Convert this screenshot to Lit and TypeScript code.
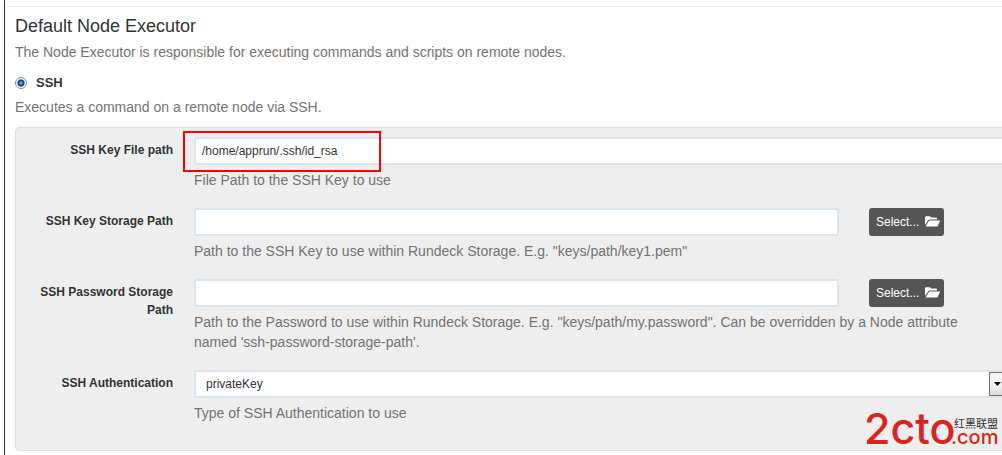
import { LitElement, html, css, svg } from "lit";
import { customElement } from "lit/decorators.js";

const folder = svg`<path d="M0 9V1.4Q0 .2 1.2 .2H4.6Q5.6 .2 5.8 1.4H10.6Q12 1.4 12 2.6V3.4H4.6L3.2 4.2Z"/><path d="M4.8 4.4H15.2L12.4 10.4H.6L3.8 4.9Z"/>`;

@customElement("app-root")
export class AppRoot extends LitElement {
  static styles = css`
    :host {
      display: block;
      height: 100vh;
      overflow: hidden;
      background: #fff;
      color: #333;
      font: 14px/20px "Liberation Sans", Arial, sans-serif;
    }
    * { box-sizing: border-box; }
    .page {
      position: relative;
      min-height: 100%;
      margin-left: 4px;
      border-left: 1px solid #333;
      padding-top: 6px;
    }
    .section {
      border-top: 1px solid #eee;
      padding: 9px 0 0 10px;
    }
    h4 { margin: 0 0 6px; font-size: 18px; line-height: 20px; font-weight: 400; }
    p { margin: 0; color: #737373; }
    .choice {
      display: flex;
      align-items: center;
      gap: 9px;
      margin: 11px 0 4px;
      font-size: 13px;
      font-weight: 700;
    }
    .choice input {
      appearance: none;
      width: 12px;
      height: 12px;
      margin: 0;
      border: 1px solid #8a8d90;
      border-radius: 50%;
      background: radial-gradient(circle, #5cc8f0 0, #1b6f9c 2px, #12344d 3px, #e4e6e8 4px, #fff 5px);
    }
    .panel {
      display: grid;
      gap: 18px;
      margin: 10px -16px 0 0;
      padding: 9px 9px 27px;
      border: 1px solid #ddd;
      border-radius: 4px;
      background: #eee;
    }
    .row { display: grid; grid-template-columns: 148px minmax(0, 1fr); column-gap: 21px; }
    .row > label {
      padding-top: 4px;
      font-size: 12px;
      line-height: 18px;
      font-weight: 700;
      text-align: right;
    }
    .field { position: relative; display: grid; gap: 5px; }
    .line { display: flex; gap: 30px; padding-right: 64px; }
    .text, select {
      flex: 1;
      width: 100%;
      min-width: 0;
      height: 28px;
      border: 2px solid #dbe5ed;
      border-radius: 3px;
      background: #fff;
      color: #333;
      padding: 0 6px;
      font: 12px "Liberation Sans", Arial, sans-serif;
    }
    select { appearance: none; padding: 0 10px; }
    .combo { display: grid; }
    .combo > * { grid-area: 1 / 1; }
    .arrow {
      display: grid;
      place-items: center;
      justify-self: end;
      width: 17px;
      margin: 2px;
      border: 1px solid #707070;
      background: linear-gradient(#f4f4f4 50%, #d8d8d8);
      pointer-events: none;
    }
    button {
      display: flex;
      align-items: center;
      justify-content: space-between;
      width: 75px;
      height: 28px;
      padding: 0 3px 0 7px;
      border: 0;
      border-radius: 3px;
      background: #555;
      color: #fff;
      font: 12px "Liberation Sans", Arial, sans-serif;
    }
    .help { padding-right: 20px; }
    .mark {
      position: absolute;
      left: -11px;
      top: -6px;
      width: 198px;
      height: 41px;
      border: 2px solid #f00;
      pointer-events: none;
    }
    .logo { position: absolute; right: 2px; top: 400px; }
    .red { fill: #da251c; font-family: Inter, "Liberation Sans", sans-serif; font-weight: 500; }
    .big { font-size: 43px; }
    .small { font-size: 20px; }
    .cjk { fill: #333; font: 11px "Noto Sans CJK SC", sans-serif; }
  `;

  private storage(id: string) {
    return html`<div class="line">
      <input class="text" type="text" id=${id} />
      <button type="button">Select...
        <svg width="16" height="12" fill="#fff" aria-hidden="true">${folder}</svg>
      </button>
    </div>`;
  }

  render() {
    return html`
      <main class="page">
        <section class="section">
          <h4>Default Node Executor</h4>
          <p>The Node Executor is responsible for executing commands and scripts on remote nodes.</p>
          <label class="choice"><input type="radio" name="executor" checked />SSH</label>
          <p>Executes a command on a remote node via SSH.</p>
          <div class="panel">
            <div class="row">
              <label for="keyfile">SSH Key File path</label>
              <div class="field">
                <input class="text" type="text" id="keyfile" value="/home/apprun/.ssh/id_rsa" />
                <p class="help">File Path to the SSH Key to use</p>
                <span class="mark"></span>
              </div>
            </div>
            <div class="row">
              <label for="keypath">SSH Key Storage Path</label>
              <div class="field">
                ${this.storage("keypath")}
                <p class="help">Path to the SSH Key to use within Rundeck Storage. E.g. "keys/path/key1.pem"</p>
              </div>
            </div>
            <div class="row">
              <label for="passpath">SSH Password Storage Path</label>
              <div class="field">
                ${this.storage("passpath")}
                <p class="help">Path to the Password to use within Rundeck Storage. E.g. "keys/path/my.password". Can be overridden by a Node attribute named 'ssh-password-storage-path'.</p>
              </div>
            </div>
            <div class="row">
              <label for="auth">SSH Authentication</label>
              <div class="field">
                <div class="combo">
                  <select id="auth"><option>privateKey</option></select>
                  <span class="arrow"><svg width="7" height="4" aria-hidden="true"><path d="M0 0H7L3.5 4Z" /></svg></span>
                </div>
                <p class="help">Type of SSH Authentication to use</p>
              </div>
            </div>
          </div>
        </section>
        <svg class="logo" width="136" height="55" role="img" aria-label="2cto.com">
          <text class="red big" x="0" y="44">2cto</text>
          <text class="red small" x="87" y="44">.com</text>
          <text class="cjk" x="90" y="28">红黑联盟</text>
        </svg>
      </main>
    `;
  }
}
